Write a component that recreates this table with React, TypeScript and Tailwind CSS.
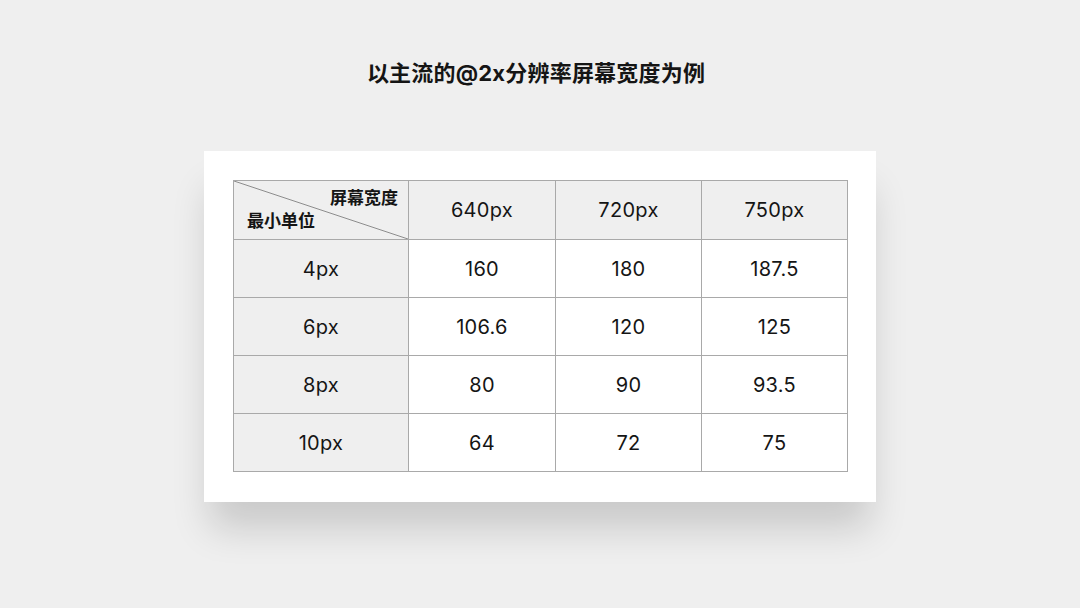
const cols = ["640px", "720px", "750px"];
const rows = [
  { unit: "4px", values: ["160", "180", "187.5"] },
  { unit: "6px", values: ["106.6", "120", "125"] },
  { unit: "8px", values: ["80", "90", "93.5"] },
  { unit: "10px", values: ["64", "72", "75"] },
];

const font = "font-['Inter','Noto_Sans_CJK_SC',sans-serif]";

export default function App() {
  return (
    <div className={`w-[1080px] h-[608px] bg-[#efefef] flex flex-col items-center ${font} text-[#151515]`}>
      <h1 className="mt-[57px] -ml-[8px] text-[22px] leading-[32px] font-bold tracking-[0.2px]">
        以主流的@2x分辨率屏幕宽度为例
      </h1>

      <div className="mt-[62px] w-[672px] h-[351px] bg-white p-[29px] shadow-[0_32px_36px_-6px_rgba(0,0,0,0.16)]">
        <table className="border-collapse w-[614px] table-fixed">
          <colgroup>
            <col className="w-[175px]" />
            <col className="w-[147px]" />
            <col className="w-[146px]" />
            <col className="w-[146px]" />
          </colgroup>
          <thead>
            <tr className="h-[59px] bg-[#efefef]">
              <th className="relative align-top border border-[#a9a9a9] p-0 font-semibold text-[17px]">
                <svg className="absolute inset-0 w-full h-full" preserveAspectRatio="none" viewBox="0 0 100 100">
                  <line x1="0" y1="0" x2="100" y2="100" stroke="#8c8c8c" strokeWidth="1" vectorEffect="non-scaling-stroke" />
                </svg>
                <div className="relative flex flex-col pl-[13px] pr-[10px] pt-[6px]">
                  <span className="self-end leading-[23px]">屏幕宽度</span>
                  <span className="self-start leading-[23px]">最小单位</span>
                </div>
              </th>
              {cols.map((c) => (
                <th key={c} className="border border-[#a9a9a9] font-normal text-[20px] tracking-[0.3px]">
                  {c}
                </th>
              ))}
            </tr>
          </thead>
          <tbody>
            {rows.map((r) => (
              <tr key={r.unit} className="h-[58px]">
                <td className="border border-[#a9a9a9] bg-[#efefef] text-center text-[20px] tracking-[0.3px]">
                  {r.unit}
                </td>
                {r.values.map((v, i) => (
                  <td key={i} className="border border-[#a9a9a9] text-center text-[20px] tracking-[0.3px]">
                    {v}
                  </td>
                ))}
              </tr>
            ))}
          </tbody>
        </table>
      </div>
    </div>
  );
}
